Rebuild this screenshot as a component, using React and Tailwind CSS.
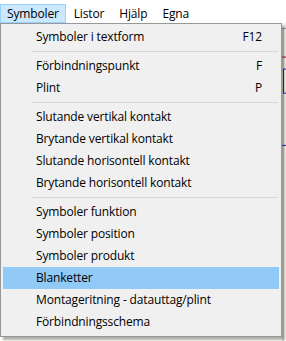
import React from "react";

const groups = [
  [
    { label: "Symboler i textform", key: "F12" },
  ],
  [
    { label: "Förbindningspunkt", key: "F" },
    { label: "Plint", key: "P" },
  ],
  [
    { label: "Slutande vertikal kontakt" },
    { label: "Brytande vertikal kontakt" },
    { label: "Slutande horisontell kontakt" },
    { label: "Brytande horisontell kontakt" },
  ],
  [
    { label: "Symboler funktion" },
    { label: "Symboler position" },
    { label: "Symboler produkt" },
    { label: "Blanketter", active: true },
    { label: "Montageritning - datauttag/plint" },
    { label: "Förbindningsschema" },
  ],
];

const menus = ["Symboler", "Listor", "Hjälp", "Egna"];

function MenuItem({ item }) {
  return (
    <div
      className={
        item.active
          ? "mx-[2px] h-[22px] flex items-center justify-between pl-[33px] pr-[17px] bg-[#91c9f7]"
          : "mx-[2px] h-[22px] flex items-center justify-between pl-[33px] pr-[17px]"
      }
    >
      <span>{item.label}</span>
      {item.key && <span>{item.key}</span>}
    </div>
  );
}

export default function App() {
  return (
    <div
      className="relative w-[286px] h-[341px] bg-white overflow-hidden text-[12px] tracking-[-0.15px] text-[#000]"
      style={{ fontFamily: '"Segoe UI", "Open Sans", "Noto Sans", sans-serif' }}
    >
      {/* menu bar */}
      <div className="h-[23px] flex items-end bg-white">
        {menus.map((m, i) => (
          <div
            key={m}
            className={
              i === 0
                ? "h-[19px] flex items-center px-[6px] bg-[#cce8ff] border border-[#99d1ff]"
                : "h-[19px] flex items-center px-[7px] ml-[1px]"
            }
          >
            {m}
          </div>
        ))}
      </div>

      {/* drawing area behind the menu */}
      <div className="h-[318px] flex flex-col">
        <div className="h-[6px] bg-[#f0f0f0] border-b border-[#a0a0a0]" />
        <svg className="flex-1 w-full bg-[#fdfdf6]" viewBox="0 0 286 311" preserveAspectRatio="none">
          <line x1="283" y1="0" x2="283" y2="311" stroke="#c8c0a8" />
          <line x1="282" y1="28" x2="286" y2="28" stroke="#a0141e" />
          <rect x="283.5" y="40" width="10" height="24" fill="none" stroke="#2030c0" />
          <line x1="282" y1="116" x2="286" y2="116" stroke="#2030c0" />
        </svg>
      </div>

      {/* dropdown */}
      <div className="absolute left-0 top-[23px] w-[282px] bg-[#f0f0f0] border border-[#979797] pt-[2px] pb-[3px] shadow-[3px_3px_2px_rgba(0,0,0,0.3)]">
        {groups.map((g, gi) => (
          <div key={gi}>
            {gi > 0 && (
              <div className="h-[7px] flex items-center pl-[31px] pr-[3px]">
                <div className="h-px w-full bg-[#d7d7d7]" />
              </div>
            )}
            {g.map((item) => (
              <MenuItem key={item.label} item={item} />
            ))}
          </div>
        ))}
      </div>
    </div>
  );
}
